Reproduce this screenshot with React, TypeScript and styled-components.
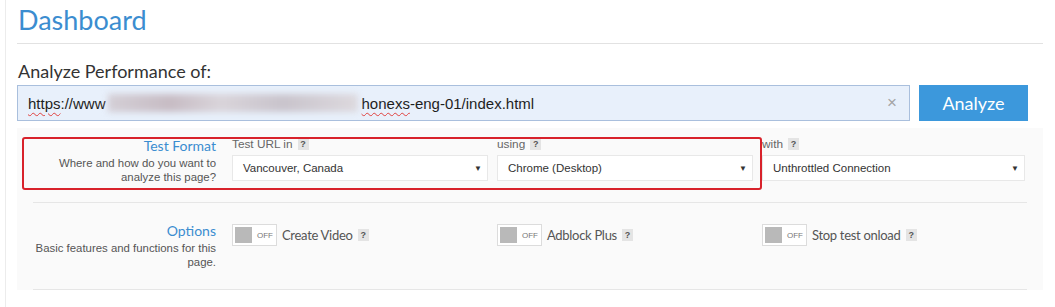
import React from 'react';
import styled, { createGlobalStyle } from 'styled-components';

const GlobalStyle = createGlobalStyle`
  html, body {
    margin: 0;
    padding: 0;
    background: #fff;
  }
  body {
    font-family: 'Liberation Sans', Arial, sans-serif;
    color: #333;
  }
`;

const Page = styled.div`
  width: 1055px;
  height: 307px;
  overflow: hidden;
  box-sizing: border-box;
  margin-left: 5px;
  border-left: 1px solid #ececec;
  padding-left: 11px;
`;

const Content = styled.div`
  width: 1026px;
`;

const Title = styled.h1`
  margin: 0;
  padding: 5px 0 8px 1px;
  font-family: Lato, 'Open Sans', sans-serif;
  font-weight: 400;
  font-size: 27px;
  line-height: 30px;
  color: #3b8dd0;
  border-bottom: 1px solid #e2e2e2;
`;

const SectionLabel = styled.div`
  margin-top: 17px;
  font-family: Lato, 'Open Sans', sans-serif;
  font-size: 18px;
  line-height: 20px;
  color: #333;
  padding-left: 1px;
`;

const UrlRow = styled.div`
  display: flex;
  gap: 9px;
  margin-top: 4px;
  align-items: stretch;
  height: 36px;
`;

const UrlBox = styled.div`
  flex: 0 0 893px;
  box-sizing: border-box;
  display: flex;
  align-items: center;
  padding: 0 12px 0 10px;
  background: #e8f0fb;
  border: 1px solid #a9bfdd;
  font-size: 15px;
  color: #1e1e1e;
`;

const Squiggle = styled.span`
  text-decoration: underline wavy #e0413f;
  text-decoration-thickness: 1px;
  text-underline-offset: 3px;
`;

const Blurred = styled.span`
  display: inline-block;
  width: 250px;
  height: 18px;
  margin: 0 4px 0 2px;
  background: linear-gradient(90deg, #d4cfd6 0%, #c7bcc4 25%, #d9d4da 45%, #c9c4cc 70%, #ddd9de 100%);
  filter: blur(3px);
`;

const UrlText = styled.div`
  flex: 1;
  display: flex;
  align-items: center;
  white-space: nowrap;
`;

const Clear = styled.span`
  color: #a4a4a4;
  font-size: 17px;
`;

const AnalyzeButton = styled.button`
  width: 109px;
  border: none;
  background: #3c98dc;
  color: #fff;
  font-family: Lato, 'Open Sans', sans-serif;
  font-size: 18px;
  padding: 0;
`;

const Panel = styled.div`
  margin-top: 7px;
  width: 1026px;
  background: #fafafa;
  padding: 0 16px;
  box-sizing: border-box;
`;

const Row = styled.div<{ $height: number; $top: number }>`
  position: relative;
  display: grid;
  grid-template-columns: 190px 256px 256px 263px;
  column-gap: 9px;
  height: ${p => p.$height}px;
  padding-top: ${p => p.$top}px;
  border-bottom: 1px solid #e6e6e6;
  box-sizing: border-box;
`;

const Highlight = styled.div`
  position: absolute;
  left: -11px;
  top: 9px;
  width: 740px;
  height: 53px;
  box-sizing: border-box;
  border: 2px solid #d8222b;
  border-radius: 3px;
  pointer-events: none;
`;

const Intro = styled.div`
  text-align: right;
  margin: 0 7px 0 -4px;
`;

const IntroTitle = styled.div`
  font-family: Lato, 'Open Sans', sans-serif;
  font-size: 14px;
  line-height: 16px;
  color: #3b8dd0;
`;

const IntroText = styled.div`
  font-size: 11.4px;
  line-height: 14px;
  color: #555;
  margin-top: 2px;
`;

const Field = styled.div`
  display: flex;
  flex-direction: column;
`;

const FieldLabel = styled.div`
  display: flex;
  align-items: center;
  gap: 5px;
  font-size: 11.8px;
  line-height: 14px;
  color: #666;
  height: 14px;
  margin-top: -1px;
`;

const Help = styled.span`
  display: inline-flex;
  align-items: center;
  justify-content: center;
  width: 11px;
  height: 12px;
  background: #e4e4e4;
  color: #555;
  font-family: 'Liberation Sans', Arial, sans-serif;
  font-size: 9px;
  font-weight: 700;
`;

const Select = styled.div`
  margin-top: 4px;
  height: 26px;
  box-sizing: border-box;
  display: flex;
  align-items: center;
  justify-content: space-between;
  padding: 0 5px 0 10px;
  background: #fff;
  border: 1px solid #e8e8e8;
  font-size: 11.5px;
  color: #333;
`;

const Caret = styled.span`
  font-size: 8px;
  color: #333;
`;

const OptionItem = styled.div`
  display: flex;
  align-items: center;
  gap: 5px;
  height: 22px;
  margin-top: 1px;
  font-family: Lato, 'Open Sans', sans-serif;
  font-size: 13px;
  letter-spacing: -0.3px;
  color: #555;
`;

const Toggle = styled.span`
  display: inline-flex;
  align-items: center;
  width: 45px;
  height: 22px;
  box-sizing: border-box;
  padding: 2px;
  background: #fff;
  border: 1px solid #dcdcdc;
`;

const Knob = styled.span`
  width: 17px;
  height: 16px;
  background: #b9b9b9;
`;

const ToggleText = styled.span`
  font-size: 8px;
  letter-spacing: 0;
  color: #777;
  margin-left: 5px;
  font-family: 'Liberation Sans', Arial, sans-serif;
`;

const selects = [
  { label: 'Test URL in', value: 'Vancouver, Canada' },
  { label: 'using', value: 'Chrome (Desktop)' },
  { label: 'with', value: 'Unthrottled Connection' },
];

const options = ['Create Video', 'Adblock Plus', 'Stop test onload'];

export default function App() {
  return (
    <>
      <GlobalStyle />
      <Page>
        <Content>
          <Title>Dashboard</Title>
          <SectionLabel>Analyze Performance of:</SectionLabel>
          <UrlRow>
            <UrlBox>
              <UrlText>
                <Squiggle>https</Squiggle>://www
                <Blurred />
                <Squiggle>honexs</Squiggle>-eng-01/index.html
              </UrlText>
              <Clear>×</Clear>
            </UrlBox>
            <AnalyzeButton>Analyze</AnalyzeButton>
          </UrlRow>

          <Panel>
            <Row $height={75} $top={10}>
              <Intro>
                <IntroTitle>Test Format</IntroTitle>
                <IntroText>Where and how do you want to analyze this page?</IntroText>
              </Intro>
              {selects.map(s => (
                <Field key={s.label}>
                  <FieldLabel>
                    {s.label} <Help>?</Help>
                  </FieldLabel>
                  <Select>
                    {s.value}
                    <Caret>▼</Caret>
                  </Select>
                </Field>
              ))}
              <Highlight />
            </Row>
            <Row $height={87} $top={20}>
              <Intro>
                <IntroTitle>Options</IntroTitle>
                <IntroText>Basic features and functions for this page.</IntroText>
              </Intro>
              {options.map(o => (
                <OptionItem key={o}>
                  <Toggle>
                    <Knob />
                    <ToggleText>OFF</ToggleText>
                  </Toggle>
                  {o}
                  <Help>?</Help>
                </OptionItem>
              ))}
            </Row>
          </Panel>
        </Content>
      </Page>
    </>
  );
}
